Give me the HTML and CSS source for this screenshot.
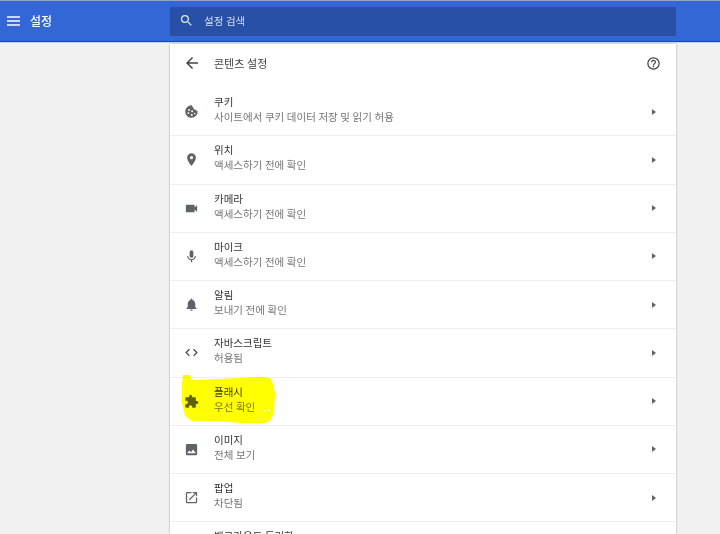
FILE: index.html
```html
<!DOCTYPE html>
<html lang="ko">
<head>
<meta charset="utf-8">
<title>설정</title>
<link rel="stylesheet" href="styles.css">
</head>
<body>
<header class="topbar">
  <div class="brand">
    <svg class="menu-icon" viewBox="0 0 13 10" width="13" height="10"><path d="M0 1h13M0 5h13M0 9h13" stroke="#fff" stroke-width="1.4" fill="none"/></svg>
    <span class="brand-title">설정</span>
  </div>
  <div class="search">
    <svg viewBox="0 0 24 24" width="15" height="15"><path fill="#dfe6f5" d="M15.500 14h-.79l-.28-.27A6.470 6.470 0 0 0 16 9.500 6.500 6.500 0 1 0 9.500 16c1.610 0 3.090-.59 4.230-1.570l.27.28v.79l5 4.990L20.490 19l-4.990-5zm-6 0C7.010 14 5 11.990 5 9.500S7.010 5 9.500 5 14 7.010 14 9.500 11.990 14 9.500 14z"/></svg>
    <span class="search-text">설정 검색</span>
  </div>
</header>
<main class="stage">
  <section class="card">
    <div class="card-head">
      <svg class="back" viewBox="0 0 24 24" width="18" height="18"><path fill="#444" d="M20 11H7.800l5.600-5.600L12 4l-8 8 8 8 1.400-1.400L7.800 13H20z"/></svg>
      <span class="head-title">콘텐츠 설정</span>
      <svg class="help" viewBox="0 0 24 24" width="15" height="15"><path fill="#444" d="M11 18h2v-2h-2v2zm1-16a10 10 0 1 0 0 20 10 10 0 0 0 0-20zm0 18a8 8 0 1 1 0-16 8 8 0 0 1 0 16zm0-14a4 4 0 0 0-4 4h2a2 2 0 1 1 4 0c0 2-3 1.750-3 5h2c0-2.250 3-2.500 3-5a4 4 0 0 0-4-4z"/></svg>
    </div>
    <div class="row">
      <svg class="ico" viewBox="0 0 24 24" width="15" height="15"><path fill="#5f6368" d="M21.900 11.500a3 3 0 0 1-2.900-2.400 3.500 3.500 0 0 1-4.200-4.200A3 3 0 0 1 12.500 2a10 10 0 1 0 9.400 9.500zM8 8a1.500 1.500 0 1 1 0 3 1.500 1.500 0 0 1 0-3zm-1 8a1.500 1.500 0 1 1 0-3 1.500 1.500 0 0 1 0 3zm5.500 3a1.500 1.500 0 1 1 0-3 1.500 1.500 0 0 1 0 3zm.5-6a1.500 1.500 0 1 1 0-3 1.500 1.500 0 0 1 0 3zm4 3.500a1.200 1.200 0 1 1 0-2.400 1.200 1.200 0 0 1 0 2.400z"/></svg>
      <div class="labels"><div class="name">쿠키</div><div class="sub">사이트에서 쿠키 데이터 저장 및 읽기 허용</div></div>
      <svg class="arrow" viewBox="0 0 4 6" width="4" height="6"><path fill="#5f6368" d="M0 0 4 3 0 6z"/></svg>
    </div>
    <div class="row">
      <svg class="ico" viewBox="0 0 24 24" width="15" height="15"><path fill="#5f6368" d="M12 2a7 7 0 0 0-7 7c0 5.250 7 13 7 13s7-7.750 7-13a7 7 0 0 0-7-7zm0 9.500a2.500 2.500 0 1 1 0-5 2.500 2.500 0 0 1 0 5z"/></svg>
      <div class="labels"><div class="name">위치</div><div class="sub">액세스하기 전에 확인</div></div>
      <svg class="arrow" viewBox="0 0 4 6" width="4" height="6"><path fill="#5f6368" d="M0 0 4 3 0 6z"/></svg>
    </div>
    <div class="row">
      <svg class="ico" viewBox="0 0 24 24" width="15" height="15"><path fill="#5f6368" d="M17 10.500V7a1 1 0 0 0-1-1H4a1 1 0 0 0-1 1v10a1 1 0 0 0 1 1h12a1 1 0 0 0 1-1v-3.500l4 4v-11l-4 4z"/></svg>
      <div class="labels"><div class="name">카메라</div><div class="sub">액세스하기 전에 확인</div></div>
      <svg class="arrow" viewBox="0 0 4 6" width="4" height="6"><path fill="#5f6368" d="M0 0 4 3 0 6z"/></svg>
    </div>
    <div class="row">
      <svg class="ico" viewBox="0 0 24 24" width="15" height="15"><path fill="#5f6368" d="M12 14a3 3 0 0 0 3-3V5a3 3 0 0 0-6 0v6a3 3 0 0 0 3 3zm5.300-3c0 3-2.500 5.100-5.300 5.100S6.700 14 6.700 11H5c0 3.400 2.700 6.200 6 6.700V21h2v-3.300c3.300-.5 6-3.300 6-6.700h-1.700z"/></svg>
      <div class="labels"><div class="name">마이크</div><div class="sub">액세스하기 전에 확인</div></div>
      <svg class="arrow" viewBox="0 0 4 6" width="4" height="6"><path fill="#5f6368" d="M0 0 4 3 0 6z"/></svg>
    </div>
    <div class="row">
      <svg class="ico" viewBox="0 0 24 24" width="15" height="15"><path fill="#5f6368" d="M12 22a2 2 0 0 0 2-2h-4a2 2 0 0 0 2 2zm6-6v-5c0-3.100-1.600-5.600-4.500-6.300V4a1.500 1.500 0 0 0-3 0v.7C7.600 5.400 6 7.900 6 11v5l-2 2v1h16v-1l-2-2z"/></svg>
      <div class="labels"><div class="name">알림</div><div class="sub">보내기 전에 확인</div></div>
      <svg class="arrow" viewBox="0 0 4 6" width="4" height="6"><path fill="#5f6368" d="M0 0 4 3 0 6z"/></svg>
    </div>
    <div class="row">
      <svg class="ico" viewBox="0 0 24 24" width="15" height="15"><path fill="#444" d="M9.400 16.600 4.800 12l4.600-4.600L8 6l-6 6 6 6 1.400-1.400zm5.200 0 4.600-4.600-4.600-4.600L16 6l6 6-6 6-1.400-1.400z"/></svg>
      <div class="labels"><div class="name">자바스크립트</div><div class="sub">허용됨</div></div>
      <svg class="arrow" viewBox="0 0 4 6" width="4" height="6"><path fill="#5f6368" d="M0 0 4 3 0 6z"/></svg>
    </div>
    <div class="row">
      <svg class="ico" viewBox="0 0 24 24" width="15" height="15"><path fill="#5f6368" d="M20.500 11H19V7a2 2 0 0 0-2-2h-4V3.500a2.500 2.500 0 0 0-5 0V5H4a2 2 0 0 0-2 2v3.800h1.500a2.700 2.700 0 0 1 0 5.400H2V20a2 2 0 0 0 2 2h3.800v-1.500a2.700 2.700 0 0 1 5.400 0V22H17a2 2 0 0 0 2-2v-4h1.500a2.500 2.500 0 0 0 0-5z"/></svg>
      <div class="labels"><div class="name">플래시</div><div class="sub">우선 확인</div></div>
      <svg class="arrow" viewBox="0 0 4 6" width="4" height="6"><path fill="#5f6368" d="M0 0 4 3 0 6z"/></svg>
    </div>
    <div class="row">
      <svg class="ico" viewBox="0 0 24 24" width="15" height="15"><path fill="#5f6368" d="M21 19V5a2 2 0 0 0-2-2H5a2 2 0 0 0-2 2v14a2 2 0 0 0 2 2h14a2 2 0 0 0 2-2zM8.500 13.500l2.500 3 3.500-4.500 4.500 6H5l3.500-4.500z"/></svg>
      <div class="labels"><div class="name">이미지</div><div class="sub">전체 보기</div></div>
      <svg class="arrow" viewBox="0 0 4 6" width="4" height="6"><path fill="#5f6368" d="M0 0 4 3 0 6z"/></svg>
    </div>
    <div class="row">
      <svg class="ico" viewBox="0 0 24 24" width="15" height="15"><path fill="#5f6368" d="M19 19H5V5h7V3H5a2 2 0 0 0-2 2v14a2 2 0 0 0 2 2h14a2 2 0 0 0 2-2v-7h-2v7zM14 3v2h3.600l-9.800 9.800 1.400 1.400L19 6.400V10h2V3h-7z"/></svg>
      <div class="labels"><div class="name">팝업</div><div class="sub">차단됨</div></div>
      <svg class="arrow" viewBox="0 0 4 6" width="4" height="6"><path fill="#5f6368" d="M0 0 4 3 0 6z"/></svg>
    </div>
    <div class="row row-cut">
      <span class="ico-spacer"></span>
      <div class="labels"><div class="name">백그라운드 동기화</div></div>
    </div>
  </section>
  <svg class="marker" viewBox="0 0 100 56" width="100" height="56"><path fill="#ffff00" fill-rule="evenodd" d="M3 5 10 5 12 10 38 9 82 7 90 8 93 14 95 23 94 43 90 51 85 53 62 53 35 51 12 51 5 46 2 33 2 13zM84 40.500h1.500v1.500H84zM88 39.500h1.500v1.500H88z"/></svg>
</main>
</body>
</html>
```
FILE: styles.css
```css
* { box-sizing: border-box; }
html, body { margin: 0; height: 534px; overflow: hidden; }
body {
  background: #f1f1f1;
  font-family: Roboto, "Noto Sans CJK KR", sans-serif;
  color: #333;
  display: flex;
  flex-direction: column;
}
.topbar {
  height: 43px;
  flex: none;
  display: flex;
  background: #3367d6;
  border-top: 1px solid #9aa5bd;
  border-bottom: 1px solid #c3d3ef;
  box-shadow: inset 0 -1px 0 #0f4bb5;
  padding-top: 6px;
}
.brand {
  width: 170px;
  height: 29px;
  display: flex;
  align-items: center;
  gap: 10px;
  padding: 0 0 2px 7px;
}
.brand-title { color: #fff; font-size: 12px; font-weight: 500; }
.search {
  width: 506px;
  height: 29px;
  background: #2850a7;
  border-radius: 1px;
  display: flex;
  align-items: center;
  gap: 10px;
  padding: 0 0 2px 9px;
}
.search-text { color: #d6def0; font-size: 10.500px; }
.stage {
  position: relative;
  flex: 1;
  min-height: 0;
  padding: 1px 0 0 170px;
  overflow: hidden;
}
.card {
  width: 506px;
  height: 100%;
  overflow: hidden;
  background: #fff;
  box-shadow: 0 0 2px rgba(0,0,0,.35);
}
.card-head {
  height: 43px;
  display: flex;
  align-items: center;
  padding: 0 15px 5px 13px;
}
.head-title { flex: 1; margin-left: 13px; font-size: 11px; color: #444; }
.row {
  height: 48.25px;
  display: flex;
  align-items: center;
  padding: 0 20px 0 14px;
  border-top: 1px solid #eee;
}
.card-head + .row { border-top-color: transparent; }
.row-cut { align-items: flex-start; padding-top: 7px; }
.ico { flex: none; }
.ico-spacer { width: 15px; flex: none; }
.labels { flex: 1; margin: 0 0 3px 15px; }
.name { font-size: 10.500px; line-height: 15px; color: #333; }
.sub { font-size: 10.500px; line-height: 15px; color: #757575; white-space: nowrap; }
.arrow { flex: none; }
.marker { position: absolute; left: 180px; top: 327px; mix-blend-mode: multiply; }
```
